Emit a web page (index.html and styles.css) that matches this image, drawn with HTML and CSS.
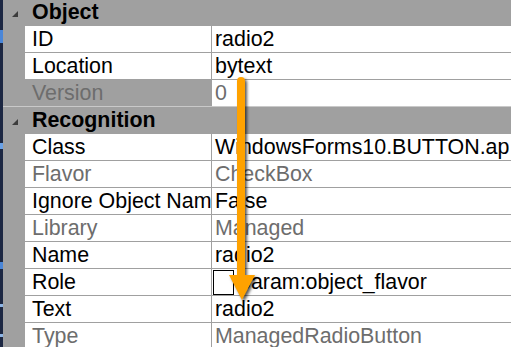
FILE: index.html
```html
<!DOCTYPE html>
<html lang="en">
<head>
  <meta charset="UTF-8">
  <title>Properties</title>
  <link rel="stylesheet" href="styles.css">
</head>
<body>
  <div class="frame">
    <div class="strip"></div>
    <div class="grid">
      <div class="group">
        <div class="cat">
          <svg class="toggle" width="6" height="6" viewBox="0 0 6 6"><polygon points="6,0 6,6 0,6" fill="#3c3c3c"/></svg>
          <span class="cat-label">Object</span>
        </div>
        <div class="row"><div class="gutter"></div><div class="name">ID</div><div class="value">radio2</div></div>
        <div class="row"><div class="gutter"></div><div class="name">Location</div><div class="value">bytext</div></div>
        <div class="row selected readonly"><div class="gutter"></div><div class="name">Version</div><div class="value">0</div></div>
      </div>
      <div class="group">
        <div class="cat">
          <svg class="toggle" width="6" height="6" viewBox="0 0 6 6"><polygon points="6,0 6,6 0,6" fill="#3c3c3c"/></svg>
          <span class="cat-label">Recognition</span>
        </div>
        <div class="row"><div class="gutter"></div><div class="name">Class</div><div class="value">WindowsForms10.BUTTON.ap</div></div>
        <div class="row readonly"><div class="gutter"></div><div class="name">Flavor</div><div class="value">CheckBox</div></div>
        <div class="row"><div class="gutter"></div><div class="name">Ignore Object Nam</div><div class="value">False</div></div>
        <div class="row readonly"><div class="gutter"></div><div class="name">Library</div><div class="value">Managed</div></div>
        <div class="row"><div class="gutter"></div><div class="name">Name</div><div class="value">radio2</div></div>
        <div class="row"><div class="gutter"></div><div class="name">Role</div><div class="value"><span class="swatch"></span>param:object_flavor</div></div>
        <div class="row"><div class="gutter"></div><div class="name">Text</div><div class="value">radio2</div></div>
        <div class="row readonly"><div class="gutter"></div><div class="name">Type</div><div class="value">ManagedRadioButton</div></div>
      </div>
    </div>

    <!-- callout arrow drawn over the grid -->
    <svg class="arrow" width="40" height="240" viewBox="0 0 40 240">
      <g class="arrow-body">
        <line x1="13" y1="9" x2="13" y2="206" stroke="#ffa200" stroke-width="8" stroke-linecap="round"/>
        <polygon points="1,203 27,203 14,228" fill="#ffa200"/>
      </g>
    </svg>
  </div>
</body>
</html>
```

FILE: styles.css
```css
body {
  margin: 0;
  width: 511px;
  height: 347px;
  overflow: hidden;
  background-color: #a0a0a0;
  font-family: "Liberation Sans", Arial, sans-serif;
  font-size: 21.4px;
  color: #000;
}
.frame {
  position: relative;
  display: flex;
  height: 347px;
}
.strip {
  width: 3px;
  flex-shrink: 0;
  background:
    linear-gradient(#4a86d8, #4a86d8) 0 30px / 3px 13px no-repeat,
    linear-gradient(#6aa2e8, #6aa2e8) 0 143px / 3px 6px no-repeat,
    linear-gradient(#4a86d8, #4a86d8) 0 262px / 3px 7px no-repeat,
    linear-gradient(#8fb6e6, #8fb6e6) 0 304px / 3px 3px no-repeat,
    linear-gradient(#8fb6e6, #8fb6e6) 0 334px / 3px 3px no-repeat,
    #1c2742;
}
.grid {
  flex: 1;
  margin-top: -1px;
  min-width: 0;
}
.cat {
  display: flex;
  align-items: center;
  height: 27px;
  line-height: 27px;
}
.toggle {
  margin-left: 9px;
  margin-top: 2px;
  flex-shrink: 0;
}
.cat-label {
  margin-left: 14px;
  font-weight: bold;
}
.row {
  display: flex;
  height: 26px;
  line-height: 26px;
  border-bottom: 1px solid #a0a0a0;
}
.group .row:last-child {
  border-bottom-color: #c9c9c9;
}
.gutter {
  width: 22px;
  flex-shrink: 0;
}
.name {
  width: 179px;
  flex-shrink: 0;
  padding-left: 7px;
  background-color: #fff;
  border-right: 1px solid #a0a0a0;
  white-space: nowrap;
  overflow: hidden;
}
.value {
  flex: 1;
  min-width: 0;
  padding-left: 3px;
  background-color: #fff;
  white-space: nowrap;
  overflow: hidden;
  display: flex;
  align-items: center;
}
.readonly .name,
.readonly .value {
  color: #6d6d6d;
}
.selected .name {
  background-color: #a0a0a0;
}
.swatch {
  width: 19px;
  height: 23px;
  margin-left: -2px;
  margin-right: 5px;
  border: 1px solid #000;
  background-color: #fff;
  flex-shrink: 0;
}
.arrow {
  position: absolute;
  left: 228px;
  top: 72px;
}
.arrow-body {
  filter: drop-shadow(2px 2px 1.5px rgba(0, 0, 0, 0.65));
}
```
